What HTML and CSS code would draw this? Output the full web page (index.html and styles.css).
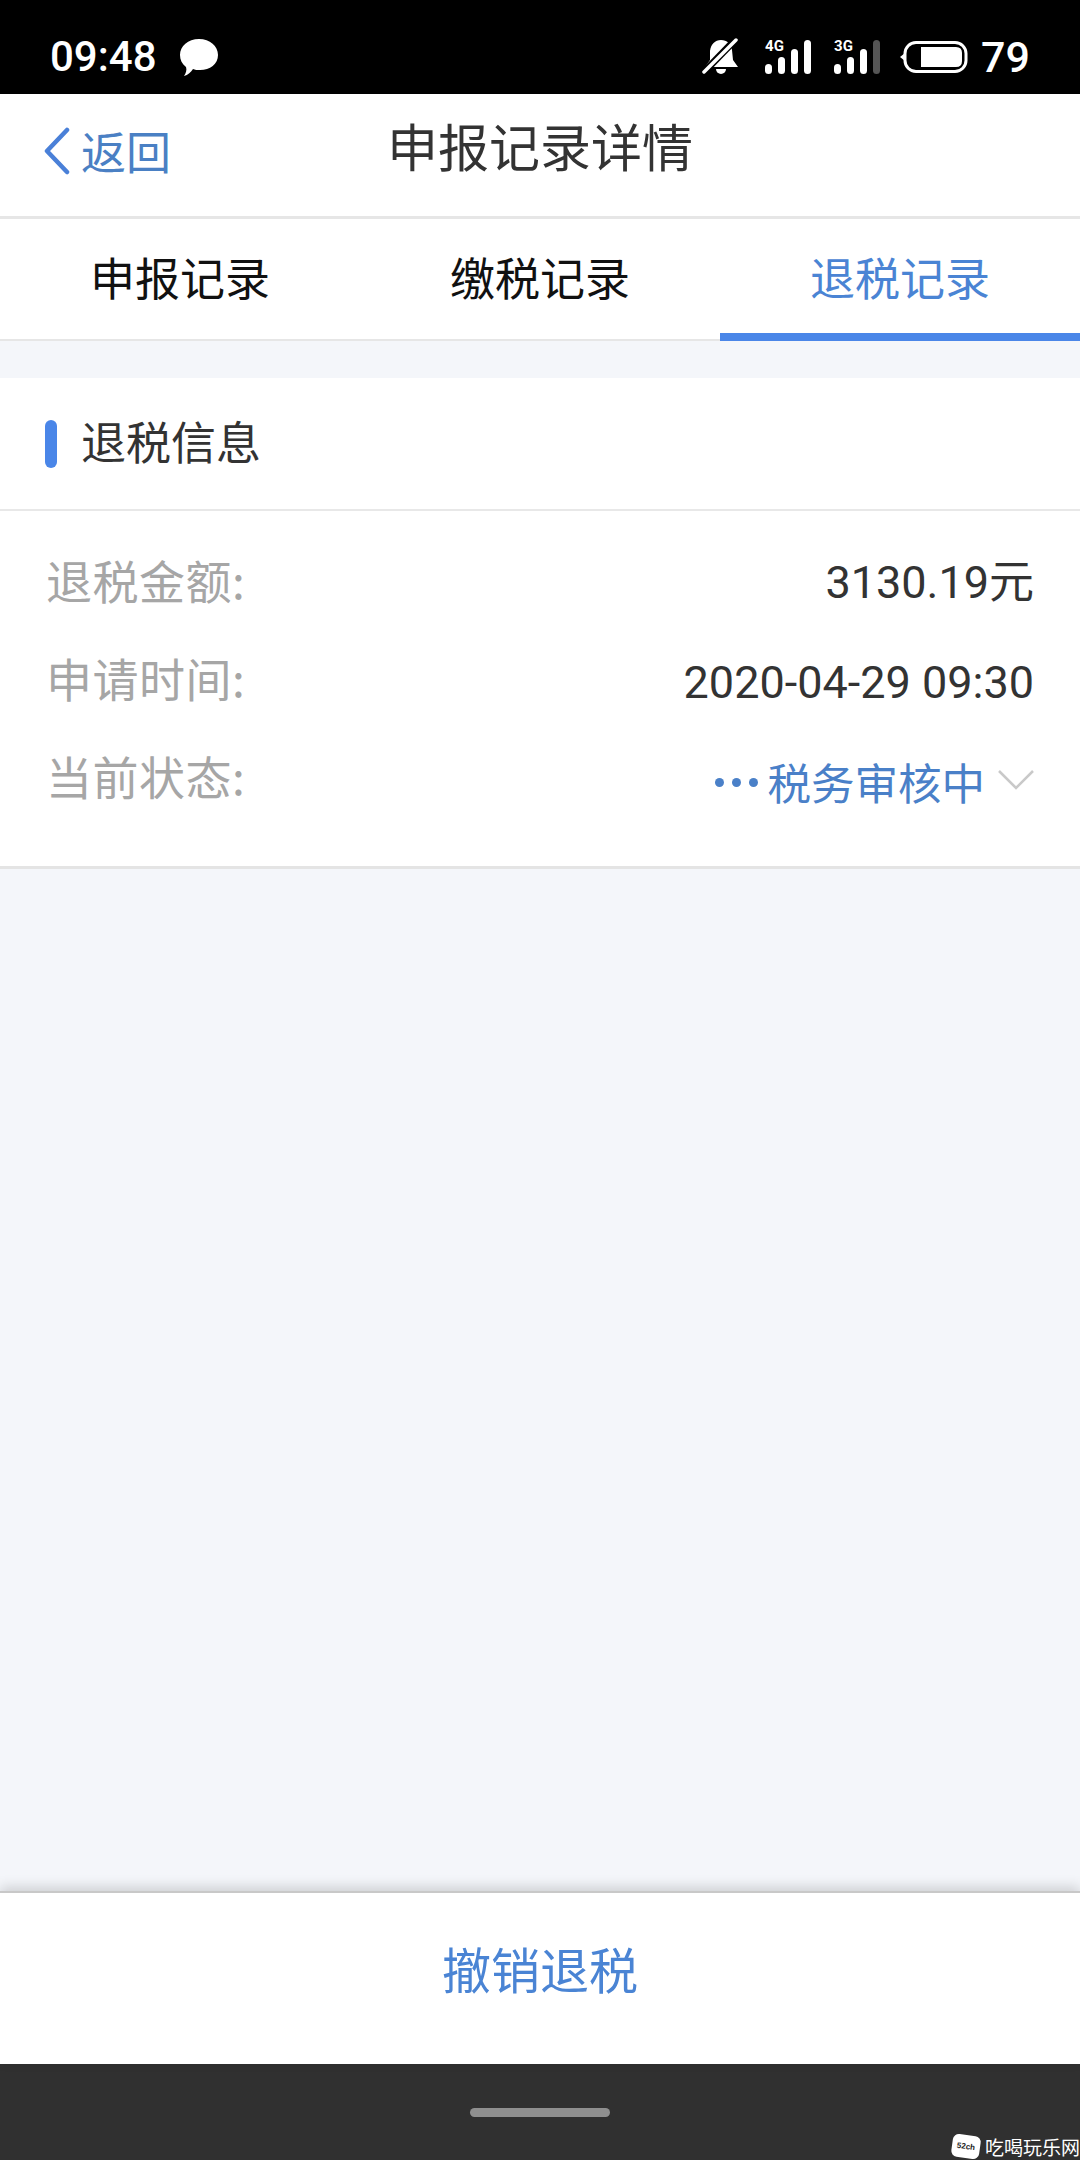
FILE: index.html
```html
<!DOCTYPE html>
<html lang="zh-CN">
<head>
<meta charset="utf-8">
<title>申报记录详情</title>
<link rel="stylesheet" href="styles.css">
</head>
<body>
<div class="page">
  <header class="status">
    <div class="status-left">
      <span class="clock">09:48</span>
      <svg class="bubble" width="40" height="38" viewBox="0 0 40 38"><path d="M20 0C31 0 39 7 39 16C39 25 31 31 21 31C18 31 16 31 14 30C12 33 9 36 5 37C7 34 8 31 7 28C3 25 1 21 1 16C1 7 9 0 20 0Z" fill="#fff"/></svg>
    </div>
    <div class="status-right">
      <svg class="bell" width="38" height="38" viewBox="0 0 38 38"><path d="M19 2C25 2 29 6 30 12L31 22L36 29H3L8 22L8 13C9 6 13 2 19 2Z" fill="#fff"/><path d="M14 31H24A5 5 0 0 1 14 31Z" fill="#fff"/><path d="M1 35L34 1" stroke="#000" stroke-width="7"/><path d="M2 34L34 2" stroke="#fff" stroke-width="3.5" stroke-linecap="round"/></svg>
      <div class="signal">
        <span class="net">4G</span>
        <i class="bar b1"></i><i class="bar b2"></i><i class="bar b3"></i><i class="bar b4"></i>
      </div>
      <div class="signal">
        <span class="net">3G</span>
        <i class="bar b1"></i><i class="bar b2"></i><i class="bar b3"></i><i class="bar b4 dim"></i>
      </div>
      <svg class="battery" width="68" height="32" viewBox="0 0 68 32"><path d="M5 12L0 16L5 20Z" fill="#fff"/><rect x="5" y="1.500" width="61" height="29" rx="11" fill="none" stroke="#fff" stroke-width="3"/><path d="M21 6H56Q62 6 62 12V20Q62 26 56 26H21Z" fill="#fff"/></svg>
      <span class="level">79</span>
    </div>
  </header>

  <nav class="nav">
    <a class="back">
      <svg width="30" height="48" viewBox="0 0 30 48"><path d="M25 3L5 24L25 45" fill="none" stroke="#4a80d8" stroke-width="4.500" stroke-linecap="round" stroke-linejoin="round"/></svg>
      <span>返回</span>
    </a>
    <h1 class="title">申报记录详情</h1>
  </nav>

  <div class="tabs">
    <div class="tab">申报记录</div>
    <div class="tab">缴税记录</div>
    <div class="tab active">退税记录</div>
  </div>

  <main class="main">
    <section class="card">
      <div class="card-head">
        <i class="marker"></i>
        <h2 class="card-title">退税信息</h2>
      </div>
      <div class="rows">
        <div class="row"><span class="label">退税金额:</span><span class="value">3130.19元</span></div>
        <div class="row"><span class="label">申请时间:</span><span class="value value-low">2020-04-29 09:30</span></div>
        <div class="row">
          <span class="label">当前状态:</span>
          <span class="state">
            <span class="dots"><i></i><i></i><i></i></span>
            <span>税务审核中</span>
            <svg width="36" height="22" viewBox="0 0 36 22"><path d="M1 2L18 19L35 2" fill="none" stroke="#c9c9c9" stroke-width="2.500"/></svg>
          </span>
        </div>
      </div>
    </section>
  </main>

  <div class="action">撤销退税</div>
  <footer class="gesture"><i class="pill"></i></footer>

  <div class="mark">
    <span class="mark-logo">52ch</span>
    <span class="mark-text">吃喝玩乐网</span>
  </div>
</div>
</body>
</html>
```
FILE: styles.css
```css
* { box-sizing: border-box; }
html, body { margin: 0; padding: 0; }
body { font-family: "Noto Sans CJK SC", "Noto Sans", sans-serif; background: #f4f6fa; }
h1, h2 { margin: 0; font-weight: 400; }
i { display: block; }

.page { position: relative; width: 1080px; height: 2160px; display: flex; flex-direction: column; overflow: hidden; }

.status { height: 94px; flex: none; background: #000; color: #fff; display: flex; justify-content: space-between; align-items: center; padding: 20px 50px 0 50px; font-family: Roboto, sans-serif; }
.status-left { display: flex; align-items: center; gap: 22px; }
.clock { font-size: 42px; font-weight: 500; line-height: 1; }
.bubble { margin-top: 1px; }
.status-right { display: flex; align-items: center; }
.bell { margin-right: 25px; }
.signal { position: relative; display: flex; align-items: flex-end; gap: 6px; height: 34px; width: 46px; margin-right: 23px; }
.net { position: absolute; left: 0; top: -1px; font-size: 15px; font-weight: 700; line-height: 1; }
.bar { width: 7px; background: #fff; border-radius: 4px; }
.b1 { height: 10px; }
.b2 { height: 17px; }
.b3 { height: 25px; }
.b4 { height: 34px; }
.dim { background: #555; }
.battery { margin-left: -3px; margin-right: 13px; }
.level { font-size: 43px; font-weight: 500; line-height: 1; }

.nav { position: relative; height: 125px; flex: none; background: #fff; border-bottom: 3px solid #e6e6e6; display: flex; align-items: center; justify-content: center; }
.back { position: absolute; left: 42px; top: 32px; display: flex; align-items: center; gap: 9px; color: #4a80c4; font-size: 45px; line-height: 50px; }
.title { font-size: 51px; line-height: 60px; color: #333; margin-bottom: 20px; }

.tabs { height: 122px; flex: none; background: #fff; border-bottom: 2px solid #e6e6e6; display: grid; grid-template-columns: repeat(3, 1fr); }
.tab { display: flex; align-items: center; justify-content: center; font-size: 45px; color: #111; height: 120px; padding-bottom: 6px; }
.tab.active { color: #4a84d4; height: 122px; border-bottom: 8px solid #4a86e8; padding-bottom: 0; }

.main { flex: 1; padding-top: 37px; }
.card { background: #fff; border-bottom: 3px solid #e4e4e4; }
.card-head { height: 133px; border-bottom: 2px solid #e8e8e8; display: flex; align-items: center; padding-left: 45px; gap: 24px; }
.marker { width: 12px; height: 48px; border-radius: 6px; background: #4a86e8; margin-top: 1px; }
.card-title { font-size: 45px; line-height: 60px; color: #333; margin-top: -6px; }

.rows { height: 355px; padding: 38px 46px 0 46px; display: flex; flex-direction: column; gap: 38px; }
.row { display: flex; justify-content: space-between; height: 60px; }
.label { font-size: 46px; line-height: 60px; color: #a6a6a6; letter-spacing: .5px; }
.value { font-size: 45px; line-height: 60px; color: #333; margin-top: 4px; font-family: Roboto, "Noto Sans CJK SC", sans-serif; }
.value-low { margin-top: 6px; }
.state { display: flex; align-items: center; height: 60px; color: #4a80c8; font-size: 43.5px; line-height: 60px; margin-top: 7px; }
.dots { display: flex; gap: 8px; margin-right: 10px; }
.dots i { width: 9px; height: 9px; border-radius: 50%; background: #4a80c8; }
.state svg { margin-left: 13px; margin-top: -4px; }

.action { height: 173px; flex: none; background: #fff; border-top: 2px solid #c8c8c8; box-shadow: 0 -4px 12px rgba(0,0,0,.16); display: flex; align-items: center; justify-content: center; color: #4a84d4; font-size: 49px; line-height: 60px; padding-bottom: 22px; position: relative; }
.gesture { height: 96px; flex: none; background: #303030; display: flex; justify-content: center; padding-top: 44px; }
.pill { width: 140px; height: 9px; border-radius: 5px; background: #8f8f8f; }

.mark { position: absolute; right: 0; bottom: 0; display: flex; align-items: center; gap: 5px; height: 27px; color: #fff; }
.mark-logo { width: 28px; height: 23px; border-radius: 6px; background: #fff; color: #222; font: 700 8px/23px "Liberation Sans", sans-serif; text-align: center; transform: rotate(8deg); }
.mark-text { font-size: 19px; line-height: 24px; white-space: nowrap; }
```
